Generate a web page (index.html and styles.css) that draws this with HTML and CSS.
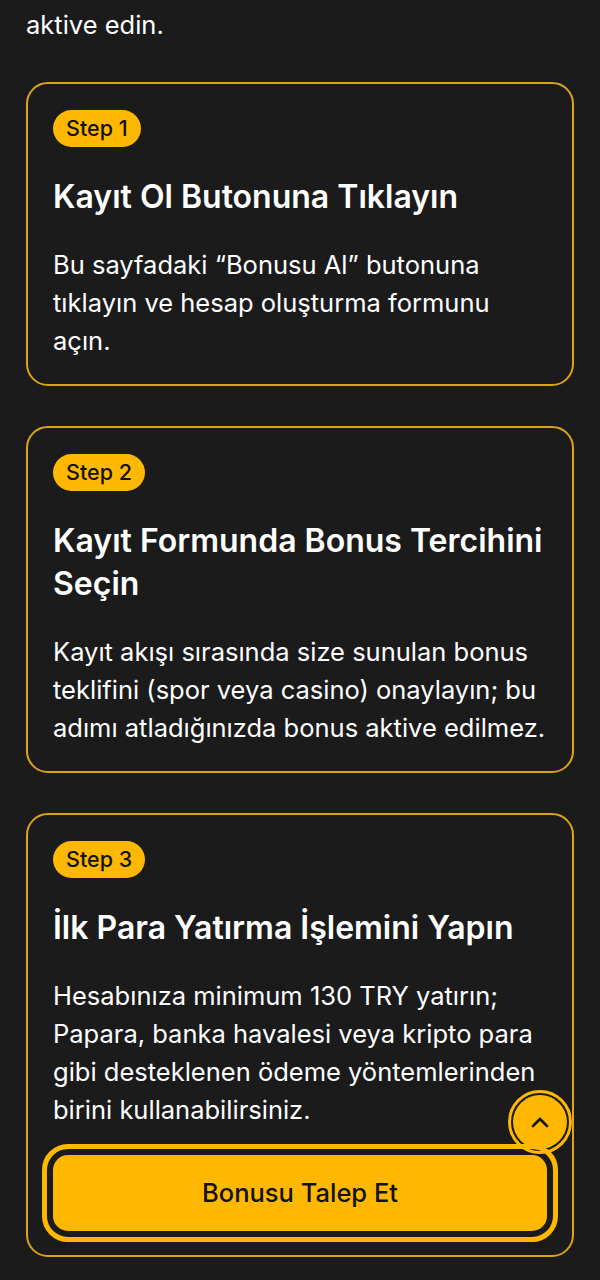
FILE: index.html
```html
<!DOCTYPE html>
<html lang="tr">
  <head>
    <meta charset="UTF-8" />
    <title>Bonus Adımları</title>
    <link rel="stylesheet" href="styles.css">
  </head>
  <body>
    <div class="page">
      <p class="intro">aktive edin.</p>

      <div class="steps">
        <div class="stepCard">
          <span class="badge">Step 1</span>
          <h3>Kayıt Ol Butonuna Tıklayın</h3>
          <p>Bu sayfadaki “Bonusu Al” butonuna tıklayın ve hesap oluşturma formunu açın.</p>
        </div>

        <div class="stepCard">
          <span class="badge">Step 2</span>
          <h3>Kayıt Formunda Bonus Tercihini Seçin</h3>
          <p>Kayıt akışı sırasında size sunulan bonus teklifini (spor veya casino) onaylayın; bu adımı atladığınızda bonus aktive edilmez.</p>
        </div>

        <div class="stepCard">
          <span class="badge">Step 3</span>
          <h3>İlk Para Yatırma İşlemini Yapın</h3>
          <p>Hesabınıza minimum 130 TRY yatırın; Papara, banka havalesi veya kripto para gibi desteklenen ödeme yöntemlerinden birini kullanabilirsiniz.</p>
          <a href="#" class="ctaButton">Bonusu Talep Et</a>
        </div>
      </div>
    </div>

    <a href="#" class="toTop" aria-label="Yukarı">
      <svg width="18" height="12" viewBox="0 0 18 12">
        <path d="M2 10 L9 3 L16 10" fill="none" stroke="#111" stroke-width="2.6" stroke-linecap="round" stroke-linejoin="round" />
      </svg>
    </a>
  </body>
</html>
```

FILE: styles.css
```css
body {
  margin: 0;
  background: #1b1b1b;
  color: #fff;
  font-family: Inter, "Noto Sans", Arial, sans-serif;
}

.page {
  padding: 6px 26px 22px;
}

.intro {
  margin: 0;
  font-size: 25.5px;
  line-height: 38px;
}

.steps {
  display: flex;
  flex-direction: column;
  gap: 40px;
  margin-top: 38px;
}

.stepCard {
  border: 2px solid #dba418;
  border-radius: 22px;
  padding: 26px 25px 24px;
  display: flex;
  flex-direction: column;
  align-items: flex-start;
}

.badge {
  background: #ffb800;
  color: #111;
  font-size: 21.5px;
  line-height: 37px;
  font-weight: 500;
  padding: 0 13px;
  border-radius: 19px;
}

.stepCard h3 {
  margin: 28px 0 28px;
  font-size: 32px;
  line-height: 43px;
  font-weight: 600;
}

.stepCard p {
  margin: 0;
  font-size: 25.5px;
  line-height: 38px;
}

.ctaButton {
  display: block;
  align-self: stretch;
  margin-top: 26px;
  background: #ffb800;
  color: #111;
  text-align: center;
  text-decoration: none;
  font-size: 25.5px;
  font-weight: 500;
  line-height: 76px;
  border-radius: 15px;
  outline: 5px solid #ffb800;
  outline-offset: 6px;
}

.toTop {
  position: fixed;
  left: 513px;
  top: 1095px;
  width: 54px;
  height: 54px;
  border-radius: 50%;
  background: #ffb800;
  outline: 3px solid #ffb800;
  outline-offset: 2px;
  display: flex;
  align-items: center;
  justify-content: center;
}
```
